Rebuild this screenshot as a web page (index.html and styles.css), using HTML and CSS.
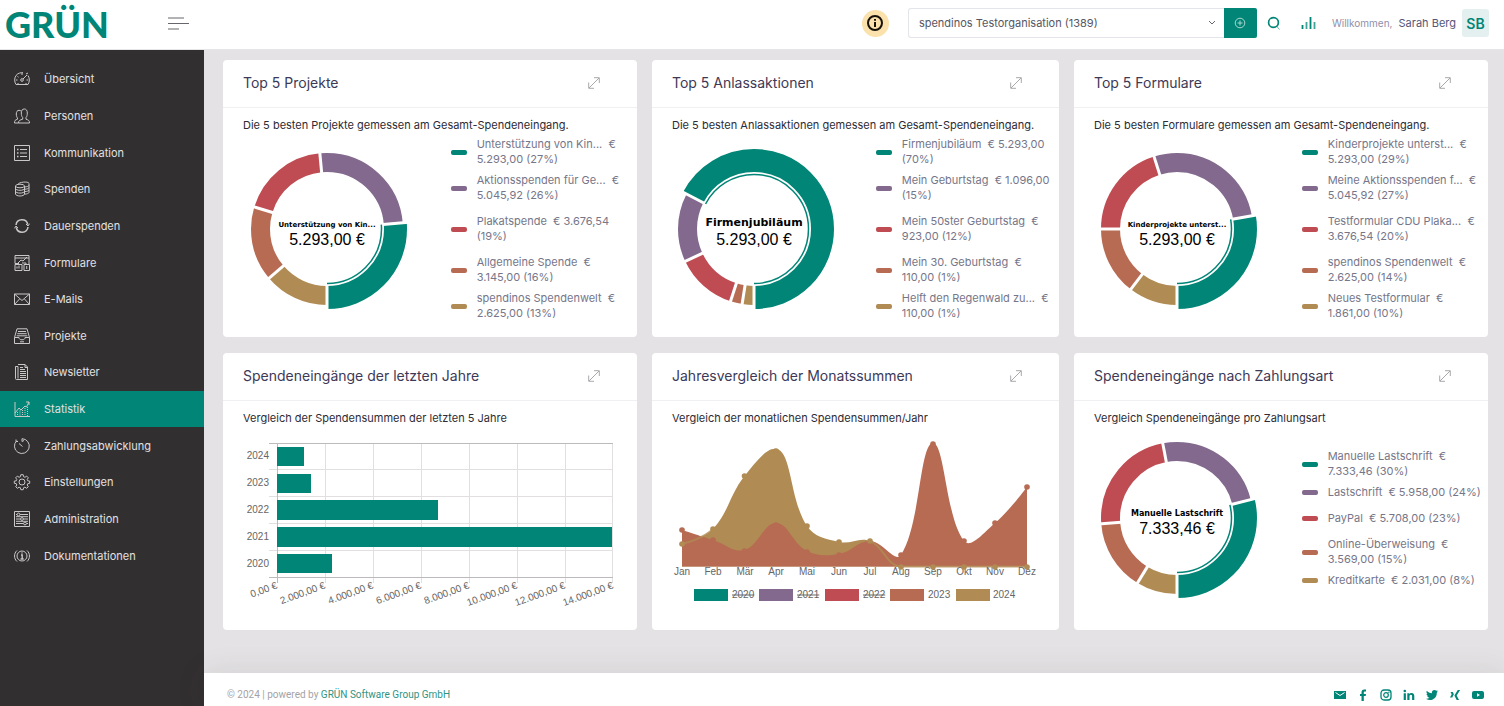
FILE: index.html
```html
<!DOCTYPE html>
<html lang="de">
<head>
<meta charset="utf-8">
<title>Statistik – GRÜN spendino</title>
<meta name="viewport" content="width=device-width, initial-scale=1">
<link rel="stylesheet" href="styles.css">
</head>
<body>
<header class="topbar">
  <a class="logo" href="#">GRÜN</a>
  <button class="burger" type="button" aria-label="Menü">
    <svg width="22" height="13" viewBox="0 0 22 13"><path d="M0 1h16M0 6.500h21M0 12h11"/></svg>
  </button>
  <div class="topbar-tools">
    <button class="info" type="button" aria-label="Information">
      <svg width="18" height="18" viewBox="0 0 18 18"><circle cx="9" cy="9" r="7"/><path d="M9 8v5M9 5v1.800"/></svg>
    </button>
    <div class="org">
      <select aria-label="Organisation"><option>spendinos Testorganisation (1389)</option></select>
      <svg class="chevron" width="8" height="6" viewBox="0 0 8 6"><path d="M1 1l3 3 3-3"/></svg>
      <button class="org-add" type="button" aria-label="Hinzufügen">
        <svg width="12" height="12" viewBox="0 0 12 12"><circle cx="6" cy="6" r="4.800"/><path d="M6 3.500v5M3.500 6h5"/></svg>
      </button>
    </div>
    <button class="tool tool-search" type="button" aria-label="Suche">
      <svg width="16" height="16" viewBox="0 0 16 16"><circle cx="7.500" cy="7.500" r="4.900" stroke-width="1.700"/><path d="M10.500 11l3 3.500" stroke-width="1" opacity=".6"/></svg>
    </button>
    <button class="tool tool-bars" type="button" aria-label="Auswertung">
      <svg width="16" height="14" viewBox="0 0 16 14"><path d="M1.500 9v4M9.500 1v12" stroke-width="1.800"/><path d="M5.500 6v7M13.500 6v7" stroke-width="1.800" opacity=".75"/></svg>
    </button>
    <div class="user"><span class="hello">Willkommen,</span> <span class="user-name">Sarah Berg</span></div>
    <div class="avatar">SB</div>
  </div>
</header>

<div class="shell">
  <nav class="sidebar" aria-label="Hauptmenü">
    <ul class="menu">
      <li><a href="#"><svg viewBox="0 0 16 16"><path d="M2 13.500C.300 11 .200 7 2 4.500 4 2 7 1.500 9 1.700M14 4.500c1.800 2.500 1.700 6.500 0 9H2M12 3l2-1M3.500 5.500l1 .7M8 2v2M2 9h1.500M12.500 9H14M12 13v-1M4 13v-1"/><circle cx="8" cy="9" r="1.300"/><path d="M9 8l4-4"/></svg><span>Übersicht</span></a></li>
      <li><a href="#"><svg viewBox="0 0 16 16"><path d="M4.500 15h11c0-2.500-1-3-3.500-3.800V9.500c1-1 1.300-2.500 1.300-4.500 0-2.500-1-4-3-4s-3 1.500-3 4c0 2 .4 3.500 1.400 4.500v1.700C6 12 4.500 12.500 4.500 15zM4.500 15H.5c0-2.500.7-3 3-3.800V10C2.700 9 2.300 8 2.300 6c0-2.300 1-3.700 2.700-3.700 1 0 1.600.3 2 .9"/></svg><span>Personen</span></a></li>
      <li><a href="#"><svg viewBox="0 0 16 16"><path d="M.5.5h15v15H.5zM6 4.500h7M6 8h7M6 11.500h7"/><path d="M3 4.500h1.500M3 8h1.500M3 11.500h1.500" stroke-width="1.500"/></svg><span>Kommunikation</span></a></li>
      <li><a href="#"><svg viewBox="0 0 16 16"><ellipse cx="6" cy="5" rx="4.500" ry="1.800"/><path d="M1.500 5v8c0 1 2 2 4.500 2s4.500-1 4.500-2V5M1.500 7.500c0 1 2 1.800 4.500 1.800s4.500-.8 4.500-1.800M1.500 10.300c0 1 2 1.800 4.500 1.800s4.500-.8 4.500-1.800M4 3.300C4.500 1 15 0 15 2.500v9c0 .8-2 1.500-4.500 1.700M10.500 6c2.500-.2 4.500-.9 4.500-1.700M10.500 8.300c2.500-.2 4.500-.9 4.500-1.700M10.500 10.700c2.500-.2 4.500-.9 4.500-1.700"/></svg><span>Spenden</span></a></li>
      <li><a href="#"><svg viewBox="0 0 16 16"><path d="M2 7a6 6 0 0 1 11.800-.5M14 9a6 6 0 0 1-11.800.5" stroke-width="1.500"/><path d="M12 6l2 2 1.500-2.300M4 10L2 8 .5 10.300"/></svg><span>Dauerspenden</span></a></li>
      <li><a href="#"><svg viewBox="0 0 16 16"><path d="M1 .5h14v9M1 .5v8h4M1 3h14M1 9.500v6h7v-6zM10 9.500h5.500v6H10zM8 8h4v1.500M3 13.500v-2M5 13.500v-3M12.700 11v3M4 8l3-3 2 1 4-4"/></svg><span>Formulare</span></a></li>
      <li><a href="#"><svg viewBox="0 0 16 16"><path d="M.5 3h15v10.500H.5zM.5 3L8 9.500 15.500 3M.5 13.500l5-5.500M15.500 13.500l-5-5.500"/></svg><span>E-Mails</span></a></li>
      <li><a href="#"><svg viewBox="0 0 16 16"><path d="M.5 9.500h4.500c0 1.500 1 2.300 3 2.300s3-.8 3-2.300h4.500v6H.5zM.5 9.500L3 .8h10l2.500 8.700M4 3.500h8M3.300 5.700h9.400M2.700 7.800h10.600M6 13.800h4"/></svg><span>Projekte</span></a></li>
      <li><a href="#"><svg viewBox="0 0 16 16"><path d="M4 .5h7l2.500 2.500v12.500h-11c-.8 0-1-.5-1-1V2.500H4v12M11 .5v3h2.500M6 5.500h5M6 7.500h6M6 9.500h6M6 11.500h6M6 13.500h6M6 3.500h3"/></svg><span>Newsletter</span></a></li>
      <li class="active"><a href="#"><svg viewBox="0 0 16 16"><path d="M1 1v14.500h15M1 12l4-5 2 2 4-4 1.500 1L15 1M12 1h3v3"/><path d="M3.500 11v4M6 9.500V15M8.500 9v6M11 7v8M13.500 6v9" stroke-dasharray="1 1"/></svg><span>Statistik</span></a></li>
      <li><a href="#"><svg viewBox="0 0 16 16"><path d="M8 3.500V.7a7.400 7.400 0 1 1-5.200 2M5 5.500l3.500 3M2 1.500v2h2M8 3.500l2-1"/></svg><span>Zahlungsabwicklung</span></a></li>
      <li><a href="#"><svg viewBox="0 0 16 16"><circle cx="8" cy="8" r="3"/><path d="M6.800.7h2.400l.4 2 1.300.6 1.800-1.200 1.600 1.700-1.100 1.700.5 1.300 2 .3v2.200l-2 .4-.5 1.300 1.100 1.700-1.600 1.600-1.800-1.100-1.300.5-.4 2H6.800l-.4-2-1.300-.5-1.700 1.100-1.700-1.600 1.100-1.700-.5-1.300-2-.4V7.100l2-.3.5-1.300-1.100-1.700 1.700-1.700 1.700 1.200 1.300-.6z"/></svg><span>Einstellungen</span></a></li>
      <li><a href="#"><svg viewBox="0 0 16 16"><path d="M.5.500h15v15H.5zM2 3.500h1M6 3.500h8M2 8h4.500M9.500 8H14M2 12.500h7.500M12.500 12.500H14M2 5.700h12M2 10.300h12"/><circle cx="4.500" cy="3.500" r="1.400"/><circle cx="8" cy="8" r="1.400"/><circle cx="11" cy="12.500" r="1.400"/></svg><span>Administration</span></a></li>
      <li><a href="#"><svg viewBox="0 0 16 16"><circle cx="8" cy="8" r="5"/><path d="M3 2.500C-.3 5.500-.3 10.500 3 13.500M13 2.500c3.300 3 3.300 8 0 11"/><path d="M7 7h1.200v4M6.500 11h3.200M7.500 5h1" stroke-width="1.400"/></svg><span>Dokumentationen</span></a></li>
    </ul>
  </nav>

  <div class="page">
    <main class="cards">
      <section class="card">
        <header class="card-head"><h2>Top 5 Projekte</h2><button type="button" class="expand" aria-label="Vergrößern"><svg width="12" height="12" viewBox="0 0 12 12"><path d="M1 11L11 1M6 .7h5.300V6M.7 5.500v5.800H6"/></svg></button></header>
        <div class="card-body">
          <p>Die 5 besten Projekte gemessen am Gesamt-Spendeneingang.</p>
          <div class="split">
            <svg class="donut" width="168" height="164" viewBox="-84 -82 168 164" role="img" aria-label="Top 5 Projekte">
              <g transform="rotate(90) scale(1 -1)">
                <circle class="seg big c1" r="68.500" pathLength="100" stroke-dasharray="26.300 100"/>
                <circle class="thin c1" r="54.500" pathLength="100" stroke-dasharray="26.300 100"/>
                <circle class="seg c2" r="66.500" pathLength="100" stroke-dasharray="25.200 100" stroke-dashoffset="-26.300"/>
                <circle class="seg c3" r="66.500" pathLength="100" stroke-dasharray="18.800 100" stroke-dashoffset="-51.500"/>
                <circle class="seg c4" r="66.500" pathLength="100" stroke-dasharray="15.900 100" stroke-dashoffset="-70.300"/>
                <circle class="seg c5" r="66.500" pathLength="100" stroke-dasharray="13.800 100" stroke-dashoffset="-86.200"/>
                <path class="cut" d="M56 0h26"/><path class="cut" d="M56 0h26" transform="rotate(94.700)"/><path class="cut" d="M56 0h26" transform="rotate(185.400)"/><path class="cut" d="M56 0h26" transform="rotate(253.100)"/><path class="cut" d="M56 0h26" transform="rotate(310.300)"/>
              </g>
              <text class="mid-name small" x="0" y="-2">Unterstützung von Kin...</text>
              <text class="mid-value" x="0" y="16">5.293,00 €</text>
            </svg>
            <ul class="legend">
              <li class="c1">Unterstützung von Kin... &nbsp;€<br>5.293,00 (27%)</li>
              <li class="c2">Aktionsspenden für Ge... &nbsp;€<br>5.045,92 (26%)</li>
              <li class="c3">Plakatspende &nbsp;€ 3.676,54<br>(19%)</li>
              <li class="c4">Allgemeine Spende &nbsp;€<br>3.145,00 (16%)</li>
              <li class="c5">spendinos Spendenwelt &nbsp;€<br>2.625,00 (13%)</li>
            </ul>
          </div>
        </div>
      </section>

      <section class="card">
        <header class="card-head"><h2>Top 5 Anlassaktionen</h2><button type="button" class="expand" aria-label="Vergrößern"><svg width="12" height="12" viewBox="0 0 12 12"><path d="M1 11L11 1M6 .7h5.300V6M.7 5.500v5.800H6"/></svg></button></header>
        <div class="card-body">
          <p>Die 5 besten Anlassaktionen gemessen am Gesamt-Spendeneingang.</p>
          <div class="split">
            <svg class="donut" width="164" height="164" viewBox="-82 -82 164 164" role="img" aria-label="Top 5 Anlassaktionen">
              <g transform="rotate(90) scale(1 -1)">
                <circle class="seg big c1" r="68.500" pathLength="100" stroke-dasharray="67.400 100"/>
                <circle class="thin c1" r="54.500" pathLength="100" stroke-dasharray="67.400 100"/>
                <circle class="seg c2" r="66.500" pathLength="100" stroke-dasharray="14.600 100" stroke-dashoffset="-67.400"/>
                <circle class="seg c3" r="66.500" pathLength="100" stroke-dasharray="13 100" stroke-dashoffset="-82"/>
                <circle class="seg c4" r="66.500" pathLength="100" stroke-dasharray="2.500 100" stroke-dashoffset="-95"/>
                <circle class="seg c5" r="66.500" pathLength="100" stroke-dasharray="2.500 100" stroke-dashoffset="-97.500"/>
                <path class="cut" d="M56 0h26"/><path class="cut" d="M56 0h26" transform="rotate(242.600)"/><path class="cut" d="M56 0h26" transform="rotate(295.200)"/><path class="cut" d="M56 0h26" transform="rotate(342)"/><path class="cut" d="M56 0h26" transform="rotate(351)"/>
              </g>
              <text class="mid-name large" x="0" y="-3">Firmenjubiläum</text>
              <text class="mid-value" x="0" y="16">5.293,00 €</text>
            </svg>
            <ul class="legend">
              <li class="c1">Firmenjubiläum &nbsp;€ 5.293,00<br>(70%)</li>
              <li class="c2">Mein Geburtstag &nbsp;€ 1.096,00<br>(15%)</li>
              <li class="c3">Mein 50ster Geburtstag &nbsp;€<br>923,00 (12%)</li>
              <li class="c4">Mein 30. Geburtstag &nbsp;€<br>110,00 (1%)</li>
              <li class="c5">Helft den Regenwald zu... &nbsp;€<br>110,00 (1%)</li>
            </ul>
          </div>
        </div>
      </section>

      <section class="card">
        <header class="card-head"><h2>Top 5 Formulare</h2><button type="button" class="expand" aria-label="Vergrößern"><svg width="12" height="12" viewBox="0 0 12 12"><path d="M1 11L11 1M6 .7h5.300V6M.7 5.500v5.800H6"/></svg></button></header>
        <div class="card-body">
          <p>Die 5 besten Formulare gemessen am Gesamt-Spendeneingang.</p>
          <div class="split">
            <svg class="donut" width="166" height="164" viewBox="-83 -82 166 164" role="img" aria-label="Top 5 Formulare">
              <g transform="rotate(90) scale(1 -1)">
                <circle class="seg big c1" r="68.500" pathLength="100" stroke-dasharray="27.800 100"/>
                <circle class="thin c1" r="54.500" pathLength="100" stroke-dasharray="27.800 100"/>
                <circle class="seg c2" r="66.500" pathLength="100" stroke-dasharray="27.100 100" stroke-dashoffset="-27.800"/>
                <circle class="seg c3" r="66.500" pathLength="100" stroke-dasharray="20.100 100" stroke-dashoffset="-54.900"/>
                <circle class="seg c4" r="66.500" pathLength="100" stroke-dasharray="14.600 100" stroke-dashoffset="-75"/>
                <circle class="seg c5" r="66.500" pathLength="100" stroke-dasharray="10.400 100" stroke-dashoffset="-89.600"/>
                <path class="cut" d="M56 0h26"/><path class="cut" d="M56 0h26" transform="rotate(100)"/><path class="cut" d="M56 0h26" transform="rotate(197.600)"/><path class="cut" d="M56 0h26" transform="rotate(270)"/><path class="cut" d="M56 0h26" transform="rotate(322.500)"/>
              </g>
              <text class="mid-name small" x="0" y="-2">Kinderprojekte unterst...</text>
              <text class="mid-value" x="0" y="16">5.293,00 €</text>
            </svg>
            <ul class="legend">
              <li class="c1">Kinderprojekte unterst... &nbsp;€<br>5.293,00 (29%)</li>
              <li class="c2">Meine Aktionsspenden f... &nbsp;€<br>5.045,92 (27%)</li>
              <li class="c3">Testformular CDU Plaka... &nbsp;€<br>3.676,54 (20%)</li>
              <li class="c4">spendinos Spendenwelt &nbsp;€<br>2.625,00 (14%)</li>
              <li class="c5">Neues Testformular &nbsp;€<br>1.861,00 (10%)</li>
            </ul>
          </div>
        </div>
      </section>

      <section class="card">
        <header class="card-head"><h2>Spendeneingänge der letzten Jahre</h2><button type="button" class="expand" aria-label="Vergrößern"><svg width="12" height="12" viewBox="0 0 12 12"><path d="M1 11L11 1M6 .7h5.300V6M.7 5.500v5.800H6"/></svg></button></header>
        <div class="card-body">
          <p>Vergleich der Spendensummen der letzten 5 Jahre</p>
          <svg class="plot" viewBox="0 0 374 184" role="img" aria-label="Spendensummen pro Jahr">
            <path class="grid" d="M82.500 13v140M130.500 13v140M178.500 13v140M226.500 13v140M274.500 13v140M322.500 13v140M369.500 13v140M26 39.500h344M26 66.500h344M26 93.500h344M26 120.500h344"/>
            <path class="axis" d="M26 13.500h344M26 147.500h344M34.500 13v140"/>
            <g class="bar"><rect x="34" y="17" width="27" height="19"/><rect x="34" y="44" width="34" height="19"/><rect x="34" y="70" width="161" height="20"/><rect x="34" y="97" width="335" height="20"/><rect x="34" y="124" width="55" height="19"/></g>
            <g class="tick end"><text x="26" y="29">2024</text><text x="26" y="56">2023</text><text x="26" y="83">2022</text><text x="26" y="110">2021</text><text x="26" y="137">2020</text>
              <text transform="translate(35 158) rotate(-20)">0,00 €</text><text transform="translate(83 158) rotate(-20)">2.000,00 €</text><text transform="translate(131 158) rotate(-20)">4.000,00 €</text><text transform="translate(179 158) rotate(-20)">6.000,00 €</text><text transform="translate(227 158) rotate(-20)">8.000,00 €</text><text transform="translate(275 158) rotate(-20)">10.000,00 €</text><text transform="translate(323 158) rotate(-20)">12.000,00 €</text><text transform="translate(371 158) rotate(-20)">14.000,00 €</text></g>
          </svg>
        </div>
      </section>

      <section class="card">
        <header class="card-head"><h2>Jahresvergleich der Monatssummen</h2><button type="button" class="expand" aria-label="Vergrößern"><svg width="12" height="12" viewBox="0 0 12 12"><path d="M1 11L11 1M6 .7h5.300V6M.7 5.500v5.800H6"/></svg></button></header>
        <div class="card-body">
          <p>Vergleich der monatlichen Spendensummen/Jahr</p>
          <svg class="plot" viewBox="0 0 367 181" role="img" aria-label="Monatssummen 2023 und 2024">
            <path class="fill5" d="M10 114C10 114 32 108.600 41 99C57 81.500 57.500 65 72.500 46C82.500 33.400 95 17 104 19C120 20 117.500 70.400 135 96C142.600 107.200 153.500 108.800 167 112C178.500 114.800 187 106.700 198 111C212 116.500 215 130.700 229 136.500H10z"/>
            <path class="fill4" d="M10 100C10 100 28.500 106 41 110C53.500 114 61.300 123 72.500 120C86.500 116.200 91.500 93 104 93C116.500 93 120.700 114 135 121C145.800 126.300 154.700 126 167 124C179.600 122 185.500 111 198 111C210.500 111 223.300 133.800 229 125C248.500 95 247.600 13 261 13C272.800 13 273.600 87.300 292 111C298.400 119.300 312.200 102.300 323 93C337.400 80.700 355 57 355 57V136.500H10z"/>
            <path class="line5" d="M10 114C10 114 32 108.600 41 99M198 111C212 116.500 215 136.500 229 136.500H355"/>
            <g class="fill4"><circle cx="10" cy="100" r="2.800"/><circle cx="41" cy="110" r="2.800"/><circle cx="72.500" cy="121" r="2.800"/><circle cx="104" cy="95" r="2.800"/><circle cx="135" cy="122" r="2.800"/><circle cx="167" cy="125" r="2.800"/><circle cx="229" cy="125" r="2.800"/><circle cx="261" cy="14" r="2.800"/><circle cx="292" cy="111" r="2.800"/><circle cx="323" cy="93" r="2.800"/><circle cx="355" cy="57" r="2.800"/></g>
            <g class="tick mid"><text x="10" y="145">Jan</text><text x="41" y="145">Feb</text><text x="73" y="145">Mär</text><text x="104" y="145">Apr</text><text x="135" y="145">Mai</text><text x="167" y="145">Jun</text><text x="198" y="145">Jul</text><text x="229" y="145">Aug</text><text x="261" y="145">Sep</text><text x="292" y="145">Okt</text><text x="323" y="145">Nov</text><text x="355" y="145">Dez</text></g>
            <g class="fill5"><circle cx="10" cy="114" r="2.800"/><circle cx="41" cy="99" r="2.800"/><circle cx="72.500" cy="46" r="2.800"/><circle cx="104" cy="21" r="2.800"/><circle cx="135" cy="96" r="2.800"/><circle cx="167" cy="112" r="2.800"/><circle cx="198" cy="111" r="2.800"/><circle cx="229" cy="137" r="2.800"/><circle cx="261" cy="137" r="2.800"/><circle cx="292" cy="137" r="2.800"/><circle cx="323" cy="137" r="2.800"/><circle cx="355" cy="137" r="2.800"/></g>
            <rect class="k1" x="22" y="159" width="34" height="12"/><rect class="k2" x="87" y="159" width="34" height="12"/><rect class="k3" x="153" y="159" width="34" height="12"/><rect class="fill4" x="218" y="159" width="34" height="12"/><rect class="fill5" x="284" y="159" width="34" height="12"/>
            <g class="tick"><text class="off" x="60" y="168">2020</text><text class="off" x="125" y="168">2021</text><text class="off" x="191" y="168">2022</text><text x="256" y="168">2023</text><text x="321" y="168">2024</text></g>
          </svg>
        </div>
      </section>

      <section class="card">
        <header class="card-head"><h2>Spendeneingänge nach Zahlungsart</h2><button type="button" class="expand" aria-label="Vergrößern"><svg width="12" height="12" viewBox="0 0 12 12"><path d="M1 11L11 1M6 .7h5.300V6M.7 5.500v5.800H6"/></svg></button></header>
        <div class="card-body">
          <p>Vergleich Spendeneingänge pro Zahlungsart</p>
          <div class="split low">
            <svg class="donut" width="166" height="164" viewBox="-83 -82 166 164" role="img" aria-label="Spendeneingänge nach Zahlungsart">
              <g transform="rotate(90) scale(1 -1)">
                <circle class="seg big c1" r="68.500" pathLength="100" stroke-dasharray="28.900 100"/>
                <circle class="thin c1" r="54.500" pathLength="100" stroke-dasharray="28.900 100"/>
                <circle class="seg c2" r="66.500" pathLength="100" stroke-dasharray="24.100 100" stroke-dashoffset="-28.900"/>
                <circle class="seg c3" r="66.500" pathLength="100" stroke-dasharray="23.200 100" stroke-dashoffset="-53"/>
                <circle class="seg c4" r="66.500" pathLength="100" stroke-dasharray="15.100 100" stroke-dashoffset="-76.200"/>
                <circle class="seg c5" r="66.500" pathLength="100" stroke-dasharray="8.700 100" stroke-dashoffset="-91.300"/>
                <path class="cut" d="M56 0h26"/><path class="cut" d="M56 0h26" transform="rotate(104)"/><path class="cut" d="M56 0h26" transform="rotate(190.800)"/><path class="cut" d="M56 0h26" transform="rotate(274.300)"/><path class="cut" d="M56 0h26" transform="rotate(328.700)"/>
              </g>
              <text class="mid-name" x="0" y="-2">Manuelle Lastschrift</text>
              <text class="mid-value" x="0" y="16">7.333,46 €</text>
            </svg>
            <ul class="legend">
              <li class="c1">Manuelle Lastschrift &nbsp;€<br>7.333,46 (30%)</li>
              <li class="c2">Lastschrift &nbsp;€ 5.958,00 (24%)</li>
              <li class="c3">PayPal &nbsp;€ 5.708,00 (23%)</li>
              <li class="c4">Online-Überweisung &nbsp;€<br>3.569,00 (15%)</li>
              <li class="c5">Kreditkarte &nbsp;€ 2.031,00 (8%)</li>
            </ul>
          </div>
        </div>
      </section>
    </main>

    <footer class="foot">
      <div>© 2024 | powered by <a href="#">GRÜN Software Group GmbH</a></div>
      <div class="social">
        <a href="#" aria-label="E-Mail"><svg viewBox="0 0 12 12"><path d="M0 2h12v8H0z"/><path d="M1.500 3.500L6 6.500l4.500-3" fill="none" stroke="#fff"/></svg></a>
        <a href="#" aria-label="Facebook"><svg viewBox="0 0 12 12"><path d="M4.500 12V7H3V5h1.500V3.500C4.500 1.500 5.500.5 7.300.5H9v2H8c-.8 0-1.200.3-1.200 1V5H9l-.3 2H6.800v5z"/></svg></a>
        <a href="#" aria-label="Instagram"><svg viewBox="0 0 12 12"><rect x="1" y="1" width="10" height="10" rx="3" fill="none" stroke="currentColor" stroke-width="1.300"/><circle cx="6" cy="6" r="2.300" fill="none" stroke="currentColor" stroke-width="1.200"/><circle cx="8.900" cy="3.200" r=".7"/></svg></a>
        <a href="#" aria-label="LinkedIn"><svg viewBox="0 0 12 12"><path d="M.7 4.200h2.200V11H.7zM4.300 4.200h2.100v1c.4-.7 1.100-1.200 2.200-1.200C10.700 4 11.300 5.300 11.300 7.200V11H9.100V7.500c0-1-.2-1.700-1.200-1.700S6.500 6.500 6.500 7.500V11H4.300z"/><circle cx="1.800" cy="2" r="1.300"/></svg></a>
        <a href="#" aria-label="Twitter"><svg viewBox="0 0 12 12"><path d="M12 2.600l-1.200 1.100C10.900 8 7.800 11 4.200 11 2.700 11 1.200 10.600 0 9.800c1.300.1 2.500-.2 3.500-1-1.100-.1-1.900-.8-2.200-1.700h1C1.200 6.700.5 5.800.5 4.700l1 .3C.5 4.100.2 2.900.8 1.700 2 3.100 3.800 4.100 5.900 4.200 5.500 2.500 6.700 1 8.400 1c.7 0 1.400.3 1.800.8l1.500-.6-1 1.400z"/></svg></a>
        <a href="#" aria-label="Xing"><svg viewBox="0 0 12 12"><path d="M1.500 3h2.200l1.200 2.200L3.200 8.500H1l1.700-3.300zM8.800 1h2.300L7.700 6.500 10 11H7.700L5.400 6.500z"/></svg></a>
        <a href="#" aria-label="YouTube"><svg viewBox="0 0 12 12"><rect x="0" y="2" width="12" height="8" rx="2"/><path d="M5 4.300L8 6 5 7.700z" fill="#fff"/></svg></a>
      </div>
    </footer>
  </div>
</div>
</body>
</html>
```

FILE: styles.css
```css
* { box-sizing: border-box; }

:root {
  --green: #008576;
  --violet: #82698d;
  --red: #bf4c52;
  --copper: #b76b53;
  --gold: #b08b53;
}

body {
  margin: 0;
  min-height: 100vh;
  display: flex;
  flex-direction: column;
  font-family: Inter, "Open Sans", sans-serif;
  font-size: 11px;
  color: #2d2b35;
  background: #e4e2e4;
}

button { padding: 0; border: 0; background: none; font: inherit; cursor: pointer; }
a { color: inherit; text-decoration: none; }
ul { margin: 0; padding: 0; list-style: none; }
svg { display: block; flex: none; }

/* Top bar */
.topbar {
  height: 50px;
  display: flex;
  align-items: center;
  padding: 0 15px 3px 5px;
  background: #fff;
  border-bottom: 1px solid #e6e6e8;
}
.logo {
  width: 163px;
  padding-top: 2px;
  font-family: Lato, sans-serif;
  font-size: 36px;
  font-weight: 900;
  line-height: 44px;
  color: var(--green);
}
.burger svg { fill: none; stroke: #66666c; stroke-width: 1; }
.topbar-tools { margin-left: auto; display: flex; align-items: center; }
.info {
  width: 27px;
  height: 27px;
  margin-right: 19px;
  border-radius: 50%;
  display: grid;
  place-items: center;
  background: #fbe1ab;
}
.info svg { fill: none; stroke: #17130c; stroke-width: 2; }
.org { position: relative; display: flex; width: 349px; }
.org select {
  flex: 1;
  height: 30px;
  padding: 0 24px 0 10px;
  appearance: none;
  border: 1px solid #e4e5ea;
  border-right: 0;
  border-radius: 3px 0 0 3px;
  background: #fff;
  font: inherit;
  color: #55565f;
}
.chevron {
  position: absolute;
  right: 41px;
  top: 12px;
  fill: none;
  stroke: #66666e;
  stroke-width: 1;
  pointer-events: none;
}
.org-add {
  width: 33px;
  height: 30px;
  display: grid;
  place-items: center;
  background: var(--green);
  border-radius: 0 2px 2px 0;
}
.org-add svg { fill: none; stroke: #a9d8d0; stroke-width: 1; }
.tool svg { fill: none; stroke: var(--green); }
.tool-search { margin-left: 9px; }
.tool-bars { margin-left: 19px; }
.user { margin-left: 15px; font-size: 11px; color: #55567a; white-space: nowrap; }
.hello { font-size: 10px; color: #8f90aa; margin-right: 3px; }
.avatar {
  width: 27px;
  height: 28px;
  margin-left: 6px;
  border-radius: 3px;
  display: grid;
  place-items: center;
  font-size: 14px;
  font-weight: 600;
  color: var(--green);
  background: #e4f0ef;
}

/* Sidebar */
.shell { flex: 1; display: flex; }
.sidebar { width: 204px; flex: none; padding-top: 11px; background: #322f31; }
.menu { display: grid; grid-template-rows: repeat(14, 1fr); height: 513px; }
.menu a {
  height: 100%;
  display: flex;
  align-items: center;
  gap: 14px;
  padding-left: 14px;
  color: #e2e1e2;
}
.menu svg { width: 16px; height: 16px; fill: none; stroke: #c9c8c9; stroke-width: 1; overflow: visible; }
.menu .active { background: var(--green); }

/* Cards */
.page { flex: 1; min-width: 0; display: flex; flex-direction: column; }
.cards {
  flex: 1;
  display: grid;
  grid-template-columns: 414fr 407fr 414fr;
  align-content: start;
  gap: 16px 15px;
  padding: 10px 16px 43px 19px;
}
.card { min-width: 0; min-height: 277px; border-radius: 4px; background: #fff; }
.card-head {
  height: 48px;
  display: flex;
  align-items: center;
  justify-content: space-between;
  padding: 0 37px 2px 20px;
  border-bottom: 1px solid #f0eff2;
}
.card-head h2 { margin: 0; font-size: 14px; font-weight: 400; color: #3d3956; }
.expand svg { fill: none; stroke: #a9a8ac; stroke-width: 1; }
.card-body { padding: 8px 20px 0; }
.card-body p { margin: 0 0 3px; line-height: 18px; white-space: nowrap; }
.split { display: grid; grid-template-columns: 55% 45%; align-items: center; min-height: 184px; }
.split.low { min-height: 176px; }

.c1 { color: var(--green); }
.c2 { color: var(--violet); }
.c3 { color: var(--red); }
.c4 { color: var(--copper); }
.c5 { color: var(--gold); }

.legend { padding-left: 2px; }
.legend li {
  position: relative;
  padding-left: 26px;
  margin-bottom: 6px;
  line-height: 15px;
  white-space: nowrap;
  -webkit-text-fill-color: #767689;
}
.legend li:nth-child(2), .legend li:nth-child(3) { margin-bottom: 11px; }
.legend li:last-child { margin-bottom: 0; }
.legend li::before {
  content: "";
  position: absolute;
  left: 0;
  top: calc(50% - 2px);
  width: 16px;
  height: 5px;
  border-radius: 2px;
  background: currentColor;
}

.donut circle { fill: none; stroke: currentColor; stroke-width: 19; }
.donut .big { stroke-width: 23; }
.donut .thin { stroke-width: 1.5; }
.cut { fill: none; stroke: #fff; stroke-width: 3; }
.mid-name, .mid-value { text-anchor: middle; fill: #000; }
.mid-name { font: bold 8px "DejaVu Sans", sans-serif; }
.mid-name.small { font-size: 7px; }
.mid-name.large { font-size: 11px; }
.mid-value { font: 16px "Liberation Sans", Arial, sans-serif; }

.plot { width: 100%; height: auto; }
.grid, .axis { fill: none; stroke: #e2dfe1; stroke-width: 1; }
.axis { stroke: #bcbabc; }
.bar { fill: var(--green); }
.tick { font: 10px "Liberation Sans", Arial, sans-serif; fill: #666; }
.tick.end { text-anchor: end; }
.tick.mid { text-anchor: middle; }
.off { text-decoration: line-through; }
.k1 { fill: var(--green); }
.k2 { fill: var(--violet); }
.k3 { fill: var(--red); }
.fill4 { fill: var(--copper); }
.fill5 { fill: var(--gold); }
.line5 { fill: none; stroke: var(--gold); stroke-width: 2; opacity: .8; }

/* Footer */
.foot {
  display: flex;
  justify-content: space-between;
  padding: 12px 20px 0 23px;
  height: 33px;
  font-family: Roboto, sans-serif;
  font-size: 10px;
  line-height: 20px;
  color: #a3a2a8;
  background: #fff;
  box-shadow: 0 0 30px rgba(80, 60, 70, .1);
}
.foot a { color: #2f9384; }
.social { display: flex; gap: 11px; padding-top: 4px; }
.social svg { width: 12px; height: 12px; fill: var(--green); color: var(--green); }
```
